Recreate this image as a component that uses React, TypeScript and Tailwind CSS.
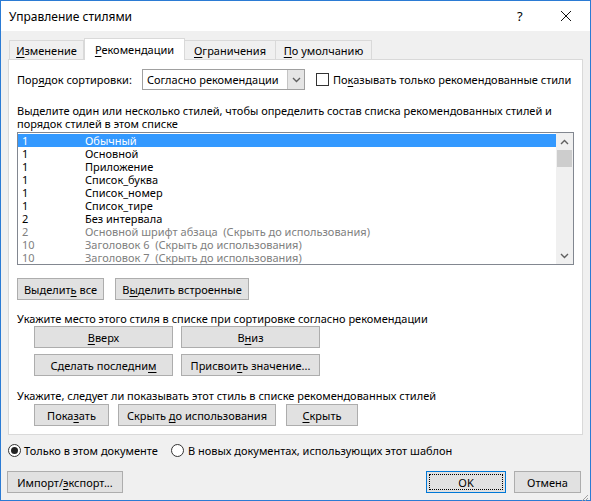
import type { ReactNode } from 'react';

function U({ children }: { children: ReactNode }) {
  return <span className="underline decoration-1 underline-offset-[2px]">{children}</span>;
}

function Btn({ children, className = '' }: { children: ReactNode; className?: string }) {
  return (
    <div className={`h-[22px] border border-[#adadad] bg-[#e1e1e1] flex items-center justify-center ${className}`}>
      <span className="whitespace-pre">{children}</span>
    </div>
  );
}

function Chevron({ up = false }: { up?: boolean }) {
  return (
    <svg width="9" height="6" viewBox="0 0 9 6" className={up ? 'rotate-180' : ''}>
      <path d="M1 1 L4.5 4.5 L8 1" fill="none" stroke="#606060" strokeWidth="1.4" />
    </svg>
  );
}

const rows = [
  { n: '1', name: 'Обычный', dim: false },
  { n: '1', name: 'Основной', dim: false },
  { n: '1', name: 'Приложение', dim: false },
  { n: '1', name: 'Список_буква', dim: false },
  { n: '1', name: 'Список_номер', dim: false },
  { n: '1', name: 'Список_тире', dim: false },
  { n: '2', name: 'Без интервала', dim: false },
  { n: '2', name: 'Основной шрифт абзаца  (Скрыть до использования)', dim: true },
  { n: '10', name: 'Заголовок 6  (Скрыть до использования)', dim: true },
  { n: '10', name: 'Заголовок 7  (Скрыть до использования)', dim: true },
];

export default function App() {
  return (
    <div className="w-[591px] h-[501px] border border-[#2b7bd4] bg-[#f0f0f0] flex flex-col text-[11px] leading-[13px] text-black font-['Noto_Sans',sans-serif]">
      {/* заголовок окна */}
      <div className="h-[30px] bg-white flex items-center pl-[8px] shrink-0">
        <span className="flex-1 text-[12px]">Управление стилями</span>
        <span className="w-[10px] text-[13px] mr-[33px]">?</span>
        <svg width="12" height="12" viewBox="0 0 12 12" className="mr-[18px]">
          <path d="M1 1 L11 11 M11 1 L1 11" stroke="#111" strokeWidth="1" />
        </svg>
      </div>

      <div className="flex flex-col px-[7px] pt-[7px]">
        {/* вкладки */}
        <div className="flex items-end h-[21px] pl-[1px]">
          <div className="w-[75px] h-[19px] border border-b-0 border-[#d9d9d9] bg-[#f0f0f0] flex items-center justify-center">
            <span><U>И</U>зменение</span>
          </div>
          <div className="w-[101px] h-[22px] -mb-px relative z-10 border border-b-0 border-[#d9d9d9] bg-white flex items-center justify-center">
            <span><U>Р</U>екомендации</span>
          </div>
          <div className="w-[91px] h-[19px] border border-b-0 border-l-0 border-[#d9d9d9] bg-[#f0f0f0] flex items-center justify-center">
            <span><U>О</U>граничения</span>
          </div>
          <div className="w-[96px] h-[19px] border border-b-0 border-l-0 border-[#d9d9d9] bg-[#f0f0f0] flex items-center justify-center">
            <span><U>П</U>о умолчанию</span>
          </div>
        </div>

        {/* панель */}
        <div className="border border-[#d9d9d9] bg-white flex flex-col px-[8px] pt-[9px] pb-[8px]">
          <div className="flex items-center h-[21px] whitespace-nowrap">
            <span className="w-[125px]">Пор<U>я</U>док сортировки:</span>
            <div className="w-[163px] h-[21px] border border-[#a0a0a0] flex items-center">
              <span className="flex-1 pl-[4px]">Согласно рекомендации</span>
              <div className="w-[17px] h-[19px] bg-[#e5e5e5] border-l border-[#c4c4c4] flex items-center justify-center">
                <Chevron />
              </div>
            </div>
            <div className="ml-[11px] w-[13px] h-[13px] border border-[#333] bg-white" />
            <span className="ml-[4px]">По<U>к</U>азывать только рекомендованные стили</span>
          </div>

          <p className="mt-[14px]">
            Выделите один или несколько стилей, чтобы определить состав списка рекомендованных стилей и
            <br />
            порядок стилей в этом списке
          </p>

          {/* список */}
          <div className="mt-[2px] h-[133px] border border-[#828790] flex">
            <div className="flex-1 pt-[1px]">
              {rows.map((r, i) => (
                <div
                  key={i}
                  className={`h-[13px] flex items-center whitespace-pre ${i === 0 ? 'bg-[#3399ff] text-white' : r.dim ? 'text-[#808080]' : ''}`}
                >
                  <span className="w-[67px] pl-[4px]">{r.n}</span>
                  <span>{r.name}</span>
                </div>
              ))}
            </div>
            <div className="w-[17px] bg-[#f0f0f0] flex flex-col">
              <div className="h-[17px] flex items-center justify-center">
                <Chevron up />
              </div>
              <div className="h-[17px] mx-[1px] bg-[#cdcdcd]" />
              <div className="flex-1" />
              <div className="h-[17px] flex items-center justify-center">
                <Chevron />
              </div>
            </div>
          </div>

          <div className="mt-[13px] flex gap-[11px]">
            <Btn className="w-[87px]">Выделит<U>ь</U> все</Btn>
            <Btn className="w-[134px]">В<U>ы</U>делить встроенные</Btn>
          </div>

          <p className="mt-[12px]">Укажите место этого стиля в списке при сортировке согласно рекомендации</p>
          <div className="mt-[1px] ml-[17px] grid grid-cols-[139px_139px] gap-x-[8px] gap-y-[6px]">
            <Btn><U>В</U>верх</Btn>
            <Btn>В<U>н</U>из</Btn>
            <Btn>Сделать последни<U>м</U></Btn>
            <Btn>Присвои<U>т</U>ь значение...</Btn>
          </div>

          <p className="mt-[13px]">Укажите, следует ли показывать этот стиль в списке рекомендованных стилей</p>
          <div className="mt-[2px] ml-[17px] flex">
            <Btn className="w-[75px]">Пока<U>з</U>ать</Btn>
            <Btn className="w-[158px] ml-[9px]">Скрыть <U>д</U>о использования</Btn>
            <Btn className="w-[72px] ml-[10px]"><U>С</U>крыть</Btn>
          </div>
        </div>

        {/* переключатели */}
        <div className="mt-[9px] h-[13px] flex items-center">
          <div className="w-[13px] h-[13px] rounded-full border border-[#333] bg-white flex items-center justify-center">
            <div className="w-[7px] h-[7px] rounded-full bg-[#222]" />
          </div>
          <span className="ml-[3px]">Только в этом документе</span>
          <div className="ml-[13px] w-[13px] h-[13px] rounded-full border border-[#333] bg-white" />
          <span className="ml-[4px]">В новых документах, использующих этот шаблон</span>
        </div>

        {/* кнопки внизу */}
        <div className="mt-[14px] flex items-center">
          <Btn className="w-[116px] -ml-px">Импорт/<U>э</U>кспорт...</Btn>
          <div className="flex-1" />
          <div className="w-[80px] h-[22px] border border-[#0078d7] bg-[#e1e1e1] p-[2px]">
            <div className="h-full border border-dotted border-black flex items-center justify-center">OK</div>
          </div>
          <Btn className="w-[67px] ml-[8px] mr-[2px]">Отмена</Btn>
        </div>
      </div>

      <div className="flex-1 flex items-end justify-end pr-[1px] pb-[1px]">
        <svg width="10" height="10" viewBox="0 0 10 10">
          <path d="M9 2 L2 9 M9 5 L5 9 M9 8 L8 9" stroke="#a0a0a0" strokeWidth="1" />
        </svg>
      </div>
    </div>
  );
}
